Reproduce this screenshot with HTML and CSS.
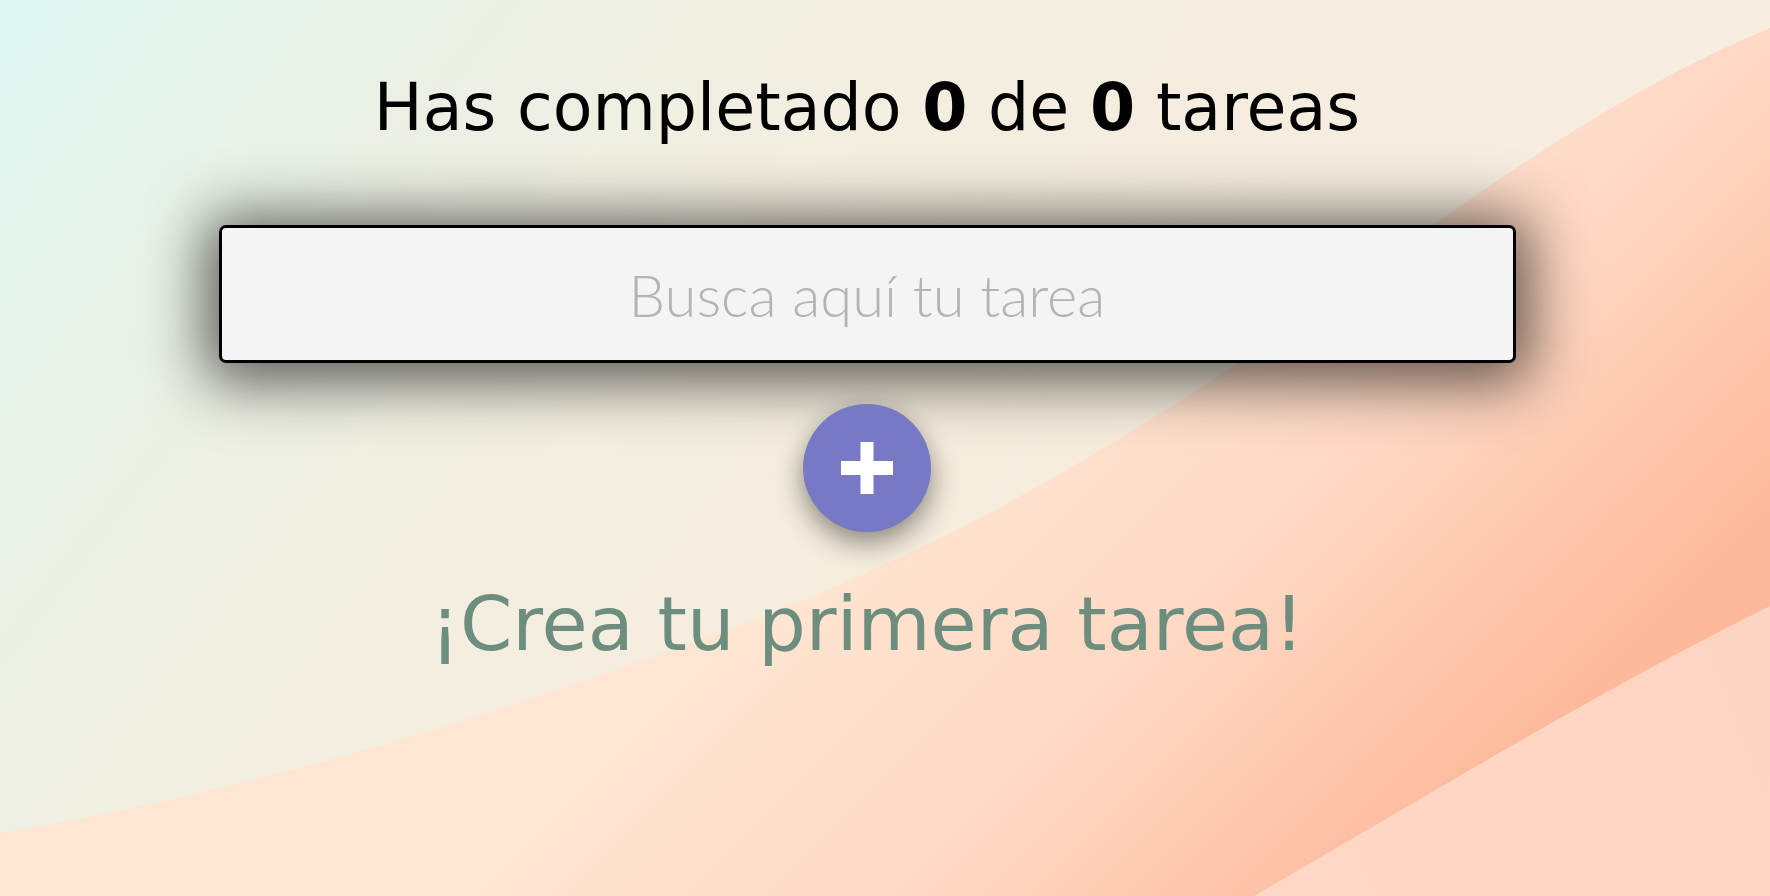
FILE: index.html
```html
<!DOCTYPE html>
<html lang="es">
<head>
<meta charset="utf-8">
<title>Tareas</title>
<link rel="stylesheet" href="styles.css">
</head>
<body>
<svg class="backdrop" viewBox="0 0 1770 896" preserveAspectRatio="none" aria-hidden="true">
  <defs>
    <linearGradient id="cream" x1="0" y1="0" x2="900" y2="700" gradientUnits="userSpaceOnUse">
      <stop offset="0" stop-color="#dff7f3"/>
      <stop offset="0.35" stop-color="#ecf0e4"/>
      <stop offset="0.7" stop-color="#f4eee0"/>
      <stop offset="1" stop-color="#f6ecdd"/>
    </linearGradient>
    <linearGradient id="creamTop" x1="900" y1="0" x2="1770" y2="0" gradientUnits="userSpaceOnUse">
      <stop offset="0" stop-color="#f2efe2" stop-opacity="0"/>
      <stop offset="1" stop-color="#f7ede0" stop-opacity="0.9"/>
    </linearGradient>
    <linearGradient id="peach" x1="1000" y1="360" x2="1460" y2="820" gradientUnits="userSpaceOnUse">
      <stop offset="0" stop-color="#ffe6d3"/>
      <stop offset="0.5" stop-color="#fed8c3"/>
      <stop offset="1" stop-color="#fdb99c"/>
    </linearGradient>
    <linearGradient id="peachLow" x1="1254" y1="896" x2="1770" y2="700" gradientUnits="userSpaceOnUse">
      <stop offset="0" stop-color="#fed8c6"/>
      <stop offset="1" stop-color="#fdd4c0"/>
    </linearGradient>
  </defs>
  <rect x="0" y="0" width="1770" height="896" fill="url(#cream)"/>
  <rect x="0" y="0" width="1770" height="896" fill="url(#creamTop)"/>
  <path d="M0 833 C 250 790 450 730 700 640 C 950 550 1130 440 1330 300 C 1480 190 1620 90 1770 28 L1770 896 L0 896 Z" fill="url(#peach)"/>
  <path d="M1254 896 C 1420 800 1600 690 1770 606 L1770 896 Z" fill="url(#peachLow)"/>
</svg>

<main class="app">
  <h1 class="counter">Has completado <strong>0</strong> de <strong>0</strong> tareas</h1>

  <input class="search" type="text" placeholder="Busca aquí tu tarea">

  <button class="add-btn" type="button" aria-label="Crear tarea">
    <svg class="plus" viewBox="0 0 52 52" width="52" height="52" aria-hidden="true">
      <rect x="19.5" y="0" width="13" height="52" fill="#fff"/>
      <rect x="0" y="19" width="52" height="14" fill="#fff"/>
    </svg>
  </button>

  <p class="empty">¡Crea tu primera tarea!</p>
</main>
</body>
</html>
```
FILE: styles.css
```css
html, body {
  margin: 0;
  padding: 0;
  height: 100%;
}

body {
  font-family: "DejaVu Sans", "Open Sans", sans-serif;
  background: #f4eee0;
  overflow: hidden;
}

.backdrop {
  position: fixed;
  top: 0;
  left: 0;
  width: 100%;
  height: 100%;
  z-index: -1;
}

.app {
  width: calc(100% - 36px);
  display: flex;
  flex-direction: column;
  align-items: center;
  padding-top: 70px;
}

.counter {
  margin: 0;
  font-size: 65px;
  line-height: 76px;
  font-weight: 400;
  color: #000;
  white-space: nowrap;
}

.counter strong {
  font-weight: 700;
}

.search {
  box-sizing: border-box;
  margin-top: 79px;
  width: 1297px;
  height: 138px;
  border: 3px solid #000;
  border-radius: 7px;
  background: #f4f4f4;
  box-shadow: 0 6px 60px 14px rgba(0, 0, 0, 0.62);
  font-family: "Lato", "Open Sans", sans-serif;
  font-weight: 300;
  font-size: 58px;
  text-align: center;
  color: #333;
  outline: none;
  padding: 0 20px;
}

.search::placeholder {
  color: #b4b4b4;
  opacity: 1;
}

.add-btn {
  margin-top: 41px;
  width: 128px;
  height: 128px;
  border: none;
  border-radius: 50%;
  background: #7879c4;
  box-shadow: 0 10px 28px rgba(0, 0, 0, 0.45);
  display: flex;
  align-items: center;
  justify-content: center;
  padding: 0;
  cursor: pointer;
}

.plus {
  display: block;
}

.empty {
  margin: 48px 0 0;
  font-size: 75px;
  line-height: 88px;
  color: #6d8e7f;
  white-space: nowrap;
}
```
